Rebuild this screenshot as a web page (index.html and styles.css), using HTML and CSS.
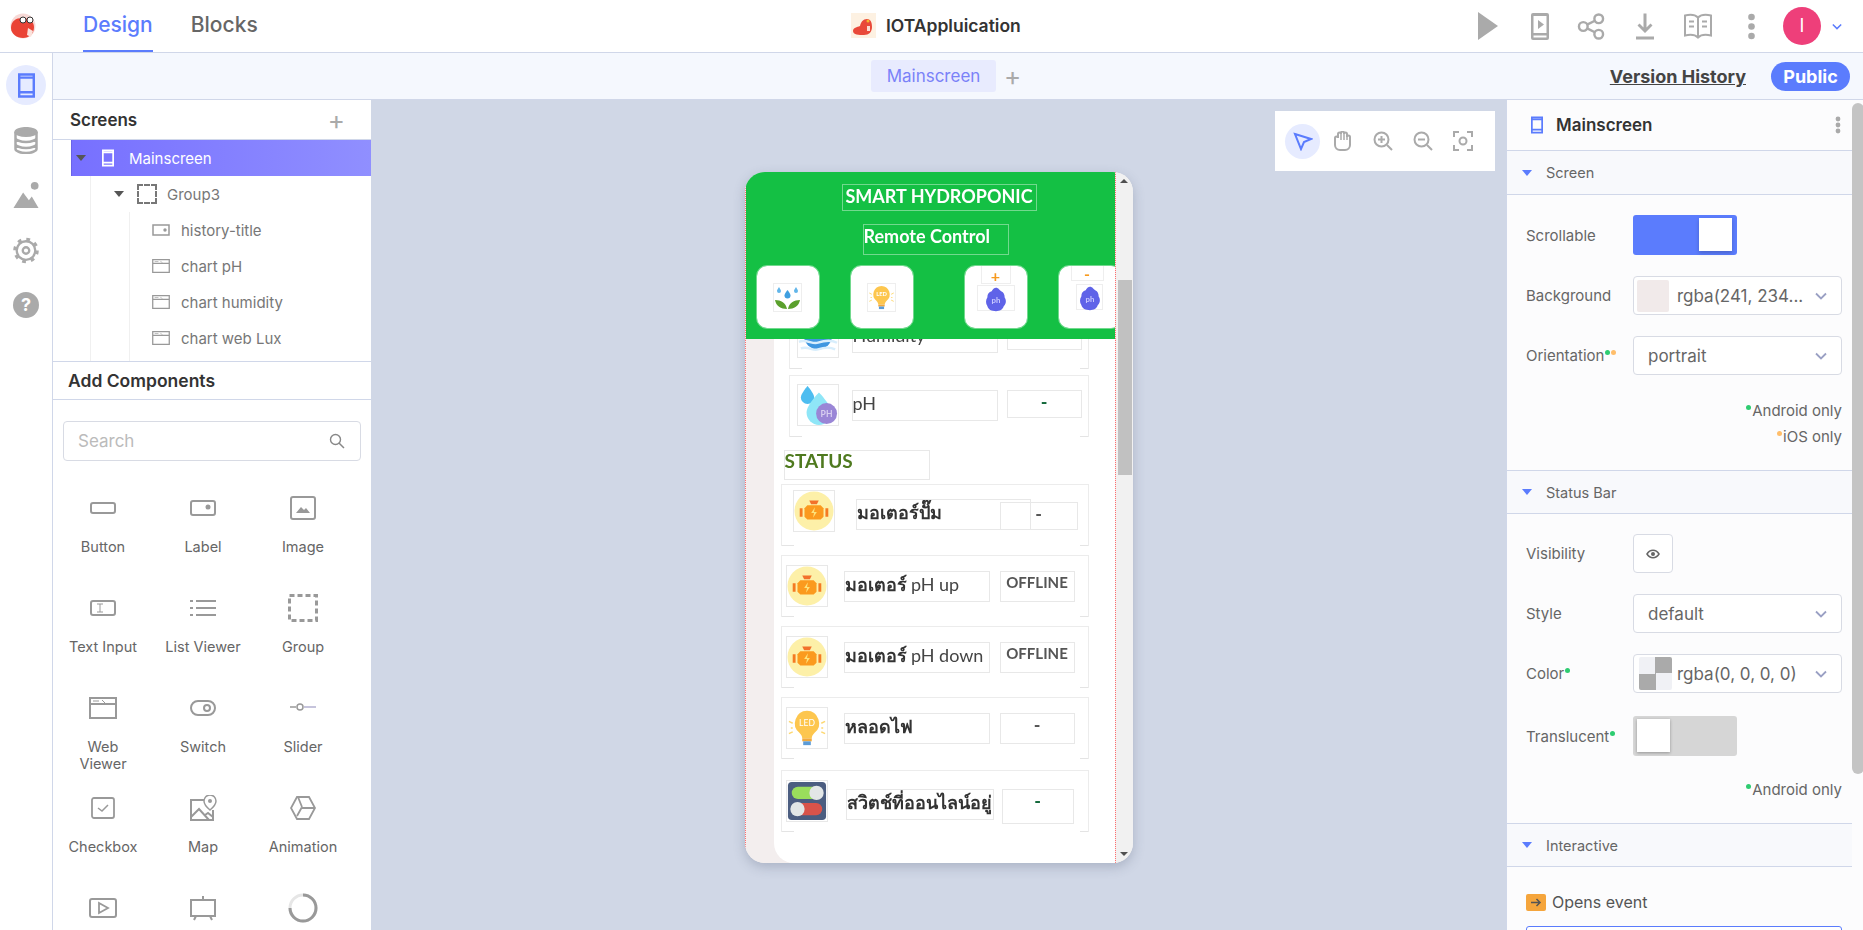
FILE: index.html
```html
<!DOCTYPE html>
<html lang="en">
<head>
    <meta charset="UTF-8">
    <meta name="viewport" content="width=device-width, initial-scale=1.0">
    <title>IOTAppluication - Design</title>
    <link rel="stylesheet" href="styles.css">
</head>
<body>
    <svg class="sprites" width="0" height="0">
        <symbol id="i-phone" viewBox="0 0 14 20"><path d="M1 1h12v18H1zM1 3.500h12M1 15.500h12" fill="none" stroke="currentColor" stroke-width="2"/></symbol>
        <symbol id="i-web" viewBox="0 0 28 22"><path d="M1 1h26v20H1zM1 7h26" fill="none" stroke="currentColor" stroke-width="2"/><path d="M4 4h6M13 3l3 3" stroke="currentColor" stroke-width="1"/></symbol>
        <symbol id="i-chev" viewBox="0 0 12 8"><path d="M1 1.500l5 5 5-5" fill="none" stroke="currentColor" stroke-width="1.800"/></symbol>
        <symbol id="i-motor" viewBox="0 0 42 42">
            <circle cx="21" cy="21" r="20.500" fill="#fdf0a8"/>
            <path d="M16 10h10l-2 4h-6z" fill="#f2712b"/>
            <path d="M14 15h14l3 3v9l-3 3H14l-3-3v-9z" fill="#fb9a1e"/>
            <path d="M6 18h3v9H6zM33 18h3v9h-3z" fill="#f57a22"/>
            <path d="M22 17l-4 6h3l-1 5 4-6h-3z" fill="#fde27a"/>
        </symbol>
        <symbol id="i-bulb" viewBox="0 0 42 42">
            <path d="M21 3a13 13 0 0 0-8 23c2 2 3 4 3 6h10c0-2 1-4 3-6a13 13 0 0 0-8-23z" fill="#fdc64e"/>
            <path d="M16 32h10v3H16z" fill="#f2a93b"/>
            <path d="M17 35h8v4h-8z" fill="#5c9bd6"/>
            <path d="M2 14l4 2M2 27l4-2M40 14l-4 2M40 27l-4-2M4 21h2M36 21h2" stroke="#fdd873" stroke-width="1.500"/>
        </symbol>
        <symbol id="i-blob" viewBox="0 0 26 30">
            <path d="M13 1c3 0 4 3 6 4 3 1 4 4 4 7 2 3 2 7-1 10-1 4-5 6-9 6-5 0-9-2-10-6-2-3-2-7 0-10 0-4 2-6 5-7 1-2 3-4 5-4z" fill="#5f63e8"/>
        </symbol>
    </svg>

    <header class="topbar">
        <svg class="logo" viewBox="0 0 26 26">
            <circle cx="13" cy="13" r="12.500" fill="#f7d9d6"/>
            <path d="M1 15C1 8 6 5 12 5c6 0 12 3 12 9 0 7-5 11-11 11S1 21 1 15z" fill="#ea4335"/>
            <circle cx="13" cy="7" r="3" fill="#fff" stroke="#333"/><circle cx="20" cy="7" r="3" fill="#fff" stroke="#333"/>
            <path d="M18 15l5 3-2 6-4-2z" fill="#fbe2dc"/>
        </svg>
        <nav class="tabs">
            <a class="tab tab-active">Design</a>
            <a class="tab">Blocks</a>
        </nav>
        <div class="project">
            <svg class="project-logo" viewBox="0 0 25 25">
                <rect width="25" height="25" fill="#fdf1e2"/>
                <path d="M2 18c0-3 4-4 7-5 1-4 3-7 7-7 4 0 5 4 5 8 0 5-3 8-8 8-5 0-11 0-11-4z" fill="#e9493a"/>
                <circle cx="17" cy="8" r="1.500" fill="#f5b52e"/>
                <path d="M16 13h3v5h-3z" fill="#fbdcd3"/>
            </svg>
            <span>IOTAppluication</span>
        </div>
        <div class="top-actions">
            <svg class="top-icon play" viewBox="0 0 20 28"><path d="M0 0l20 14L0 28z"/></svg>
            <svg class="top-icon device" viewBox="0 0 18 27"><path fill-rule="evenodd" d="M2 0h14a2 2 0 0 1 2 2v23a2 2 0 0 1-2 2H2a2 2 0 0 1-2-2V2a2 2 0 0 1 2-2zm.5 3v17h13V3zm0 19.500v2h13v-2zM7 7l6 4.500L7 16z"/></svg>
            <svg class="top-icon share" viewBox="0 0 28 28"><g fill="none" stroke="#aaa" stroke-width="2.500"><circle cx="6" cy="14" r="4.500"/><circle cx="22" cy="6" r="4.500"/><circle cx="22" cy="22" r="4.500"/><path d="M10 12l8-4M10 16l8 4"/></g></svg>
            <svg class="top-icon download" viewBox="0 0 18 26"><path d="M0 23h18v3H0zM7.500 0h3v14l4-4 2 2-7.500 7.500L1.500 12l2-2 4 4z"/></svg>
            <svg class="top-icon book" viewBox="0 0 28 26"><g fill="none" stroke="#aaa" stroke-width="2"><path d="M14 4C11 1 5 1 1 2v20c4-1 10-1 13 2 3-3 9-3 13-2V2c-4-1-10-1-13 2zM14 4v20"/><path d="M5 8h5M5 13h5M18 8h5M18 13h5"/></g></svg>
            <svg class="top-icon kebab" viewBox="0 0 7 26"><circle cx="3.500" cy="3.500" r="3.300"/><circle cx="3.500" cy="13" r="3.300"/><circle cx="3.500" cy="22.500" r="3.300"/></svg>
            <div class="avatar">I</div>
            <svg class="avatar-chev"><use href="#i-chev"/></svg>
        </div>
    </header>

    <div class="app">
        <aside class="rail">
            <div class="rail-item rail-active"><svg class="rail-phone"><use href="#i-phone"/></svg></div>
            <div class="rail-item">
                <svg class="rail-icon" viewBox="0 0 24 27"><g fill="none" stroke="#aaa" stroke-width="2.500"><ellipse cx="12" cy="5" rx="10.500" ry="3.800" fill="#aaa"/><path d="M1.500 5v17c0 2 5 4 10.500 4s10.500-2 10.500-4V5M1.500 11c0 2 5 4 10.500 4s10.500-2 10.500-4M1.500 17c0 2 5 4 10.500 4s10.500-2 10.500-4"/></g></svg>
            </div>
            <div class="rail-item">
                <svg class="rail-icon" viewBox="0 0 26 28"><circle cx="22" cy="4" r="4" fill="#aaa"/><path d="M0 27L10 11l6 8 3-4 7 12z" fill="#aaa"/></svg>
            </div>
            <div class="rail-item">
                <svg class="rail-icon" viewBox="0 0 28 28"><g fill="none" stroke="#aaa"><circle cx="14" cy="14" r="10" stroke-width="2.500"/><circle cx="14" cy="14" r="3.500" stroke-width="2.500"/><circle cx="14" cy="14" r="12" stroke-width="3.500" stroke-dasharray="4 5.420"/></g></svg>
            </div>
            <div class="rail-item">
                <div class="help">?</div>
            </div>
        </aside>

        <div class="workspace">
            <div class="subbar">
                <div class="screen-tab">Mainscreen</div>
                <span class="subbar-plus">+</span>
                <a class="version">Version History</a>
                <span class="public">Public</span>
            </div>

            <div class="panes">
                <section class="left-panel">
                    <div class="panel-head">
                        <h2>Screens</h2>
                        <span class="head-plus">+</span>
                    </div>
                    <div class="tree">
                        <div class="tree-row tree-selected">
                            <i class="caret"></i>
                            <svg class="tree-phone"><use href="#i-phone"/></svg>
                            <span>Mainscreen</span>
                        </div>
                        <div class="tree-row tree-group">
                            <i class="caret"></i>
                            <span class="dash-box"></span>
                            <span>Group3</span>
                        </div>
                        <div class="tree-row tree-child">
                            <svg class="tree-icon" viewBox="0 0 18 12"><path d="M1 1h16v10H1z" fill="none" stroke="#999" stroke-width="1.500"/><circle cx="13" cy="6" r="1.700" fill="#999"/></svg>
                            <span>history-title</span>
                        </div>
                        <div class="tree-row tree-child">
                            <svg class="tree-icon"><use href="#i-web"/></svg>
                            <span>chart pH</span>
                        </div>
                        <div class="tree-row tree-child">
                            <svg class="tree-icon"><use href="#i-web"/></svg>
                            <span>chart humidity</span>
                        </div>
                        <div class="tree-row tree-child">
                            <svg class="tree-icon"><use href="#i-web"/></svg>
                            <span>chart web Lux</span>
                        </div>
                    </div>
                    <div class="add-head"><h2>Add Components</h2></div>
                    <div class="search">
                        <span>Search</span>
                        <svg class="search-icon" viewBox="0 0 16 16"><circle cx="6.500" cy="6.500" r="5" fill="none" stroke="#888" stroke-width="1.400"/><path d="M10 10l5 5" stroke="#888" stroke-width="1.500"/></svg>
                    </div>
                    <div class="comp-grid">
                        <div class="comp">
                            <div class="comp-icon"><svg width="26" height="14" viewBox="0 0 26 14"><rect x="1" y="2" width="24" height="10" rx="2" fill="none" stroke="#999" stroke-width="2"/></svg></div>
                            <div>Button</div>
                        </div>
                        <div class="comp">
                            <div class="comp-icon"><svg width="26" height="16" viewBox="0 0 26 16"><rect x="1" y="1" width="24" height="14" rx="2" fill="none" stroke="#999" stroke-width="2"/><circle cx="18" cy="7" r="2.500" fill="#999"/></svg></div>
                            <div>Label</div>
                        </div>
                        <div class="comp">
                            <div class="comp-icon"><svg width="26" height="24" viewBox="0 0 26 24"><rect x="1" y="1" width="24" height="22" rx="2" fill="none" stroke="#999" stroke-width="2"/><path d="M6 17l5-6 3 3 2-2 4 5z" fill="#999"/></svg></div>
                            <div>Image</div>
                        </div>
                        <div class="comp">
                            <div class="comp-icon"><svg width="26" height="16" viewBox="0 0 26 16"><rect x="1" y="1" width="24" height="14" rx="2" fill="none" stroke="#999" stroke-width="2"/><path d="M7 4h6M7 12h6M10 4v8" stroke="#999"/></svg></div>
                            <div>Text Input</div>
                        </div>
                        <div class="comp">
                            <div class="comp-icon"><svg width="26" height="18" viewBox="0 0 26 18"><path d="M0 2h3M6 2h20M0 9h3M6 9h20M0 16h3M6 16h20" stroke="#999" stroke-width="2"/></svg></div>
                            <div>List Viewer</div>
                        </div>
                        <div class="comp">
                            <div class="comp-icon"><svg width="30" height="28" viewBox="0 0 30 28"><rect x="1.500" y="1.500" width="27" height="25" fill="none" stroke="#999" stroke-width="3" stroke-dasharray="5 3"/></svg></div>
                            <div>Group</div>
                        </div>
                        <div class="comp">
                            <div class="comp-icon"><svg class="comp-web"><use href="#i-web"/></svg></div>
                            <div>Web<br>Viewer</div>
                        </div>
                        <div class="comp">
                            <div class="comp-icon"><svg width="26" height="16" viewBox="0 0 26 16"><rect x="1" y="1" width="24" height="14" rx="7" fill="none" stroke="#999" stroke-width="2"/><circle cx="17" cy="8" r="3" fill="none" stroke="#999" stroke-width="2"/></svg></div>
                            <div>Switch</div>
                        </div>
                        <div class="comp">
                            <div class="comp-icon comp-slider"><svg width="26" height="10" viewBox="0 0 26 10"><path d="M0 5h6" stroke="#999" stroke-width="1.500"/><path d="M14 5h12" stroke="#b3b0d0" stroke-width="1.500"/><circle cx="10" cy="5" r="3" fill="none" stroke="#999" stroke-width="1.500"/></svg></div>
                            <div>Slider</div>
                        </div>
                        <div class="comp">
                            <div class="comp-icon"><svg width="24" height="22" viewBox="0 0 24 22"><rect x="1" y="1" width="22" height="20" rx="2" fill="none" stroke="#999" stroke-width="1.800"/><path d="M7 11l4 3 6-6" fill="none" stroke="#999" stroke-width="1.500"/></svg></div>
                            <div>Checkbox</div>
                        </div>
                        <div class="comp">
                            <div class="comp-icon"><svg width="28" height="26" viewBox="0 0 28 26"><path d="M16 5H2v20h22V15M2 22l8-8 10 11M16 20l3-2 5 4" fill="none" stroke="#999" stroke-width="2"/><path d="M21 0a6 6 0 0 0-6 6c0 4 6 9 6 9s6-5 6-9a6 6 0 0 0-6-6z" fill="#fff" stroke="#999" stroke-width="1.500"/><circle cx="21" cy="6" r="2" fill="#999"/></svg></div>
                            <div>Map</div>
                        </div>
                        <div class="comp">
                            <div class="comp-icon"><svg width="26" height="24" viewBox="0 0 26 24"><path d="M7 1h12l6 11-6 11H7L1 12z" fill="none" stroke="#999" stroke-width="1.800"/><path d="M8 1l4 10M25 12H12M7 20l5-9" stroke="#999" stroke-width="1.800"/></svg></div>
                            <div>Animation</div>
                        </div>
                        <div class="comp">
                            <div class="comp-icon"><svg width="28" height="20" viewBox="0 0 28 20"><rect x="1" y="1" width="26" height="18" rx="2" fill="none" stroke="#999" stroke-width="2"/><path d="M10 5v10l9-5z" fill="none" stroke="#999" stroke-width="1.800"/></svg></div>
                        </div>
                        <div class="comp">
                            <div class="comp-icon"><svg width="26" height="26" viewBox="0 0 26 26"><path d="M1 5h24v16H1zM13 1v4M6 21l-2 4M20 21l2 4" fill="none" stroke="#999" stroke-width="2"/></svg></div>
                        </div>
                        <div class="comp">
                            <div class="comp-icon"><svg width="30" height="30" viewBox="0 0 30 30"><circle cx="15" cy="15" r="13" fill="none" stroke="#e6e6e6" stroke-width="3"/><path d="M15 2a13 13 0 1 1-13 13" fill="none" stroke="#999" stroke-width="3"/></svg></div>
                        </div>
                    </div>
                </section>

                <main class="canvas">
                    <div class="canvas-tools">
                        <div class="tool tool-active"><svg width="20" height="20" viewBox="0 0 20 20"><path d="M2 3l16 5-7 3-3 7z" fill="none" stroke="#5b7cfd" stroke-width="2"/></svg></div>
                        <div class="tool"><svg width="18" height="20" viewBox="0 0 18 20"><path d="M1 11V7a1.500 1.500 0 0 1 3 0V3a1.500 1.500 0 0 1 3 0V2a1.500 1.500 0 0 1 3 0v1a1.500 1.500 0 0 1 3 0v3a1.500 1.500 0 0 1 3 0v8a5 5 0 0 1-5 5H6a5 5 0 0 1-5-5z" fill="none" stroke="#aaa" stroke-width="2"/><path d="M7 3v6M10 3v6M13 3v6" stroke="#aaa" stroke-width="1.500"/></svg></div>
                        <div class="tool"><svg width="20" height="20" viewBox="0 0 20 20"><g fill="none" stroke="#aaa" stroke-width="2"><circle cx="8.500" cy="8.500" r="7"/><path d="M14 14l5 5"/><path d="M5 8.500h7M8.500 5v7"/></g></svg></div>
                        <div class="tool"><svg width="20" height="20" viewBox="0 0 20 20"><g fill="none" stroke="#aaa" stroke-width="2"><circle cx="8.500" cy="8.500" r="7"/><path d="M14 14l5 5"/><path d="M5 8.500h7"/></g></svg></div>
                        <div class="tool"><svg width="20" height="20" viewBox="0 0 20 20"><g fill="none" stroke="#aaa" stroke-width="2"><path d="M1 6V1h5M14 1h5v5M19 14v5h-5M6 19H1v-5"/><circle cx="10" cy="10" r="3.500"/></g></svg></div>
                    </div>

                    <div class="phone">
                        <div class="screen">
                            <div class="screen-head">
                                <div class="title-box">SMART HYDROPONIC</div>
                                <div class="remote-box">Remote Control</div>
                                <div class="head-buttons">
                                    <div class="head-btn">
                                        <div class="btn-img">
                                            <svg viewBox="0 0 27 27">
                                                <path d="M13.500 6s-3 3.500-3 5.500a3 3 0 0 0 6 0c0-2-3-5.500-3-5.500z" fill="#3f9fe0"/>
                                                <path d="M5 3S3 6 3 7a2 2 0 0 0 4 0c0-1-2-4-2-4zM22 3s-2 3-2 4a2 2 0 0 0 4 0c0-1-2-4-2-4z" fill="#62b6ea"/>
                                                <path d="M13 25c-1-6-6-9-12-9 1 6 6 9 12 9zM14 25c1-6 6-9 12-9-1 6-6 9-12 9z" fill="#5aa02c"/>
                                            </svg>
                                        </div>
                                    </div>
                                    <div class="head-btn">
                                        <div class="btn-img"><svg viewBox="0 0 42 42"><use href="#i-bulb"/><text x="21" y="19" class="led-text">LED</text></svg></div>
                                    </div>
                                    <div class="head-btn head-btn-ph">
                                        <div class="btn-sign"><span class="plus-sign">+</span></div>
                                        <div class="btn-blob"><svg viewBox="0 0 26 30"><use href="#i-blob"/><text x="13" y="18" class="ph-text">ph</text></svg></div>
                                    </div>
                                    <div class="head-btn head-btn-ph head-btn-cut">
                                        <div class="btn-sign"><span class="minus-sign">-</span></div>
                                        <div class="btn-blob"><svg viewBox="0 0 26 30"><use href="#i-blob"/><text x="13" y="18" class="ph-text">ph</text></svg></div>
                                    </div>
                                </div>
                            </div>

                            <div class="sheet">
                                <div class="group group-sensor group-humidity">
                                    <div class="row-img">
                                        <svg viewBox="0 0 42 42"><circle cx="21" cy="19" r="15" fill="#3f97e0"/><path d="M1 26c8-3 14 3 20 1s14-3 20 0M3 33c8-3 12 3 18 1s12-3 18 0" fill="none" stroke="#d8eefc" stroke-width="2.500"/></svg>
                                    </div>
                                    <div class="row-name row-name-ph">Humidity</div>
                                    <div class="row-val"></div>
                                </div>
                                <div class="group group-sensor">
                                    <div class="row-img">
                                        <svg viewBox="0 0 42 42">
                                            <path d="M10 1s-7 8-7 12a7 7 0 0 0 14 0C17 9 10 1 10 1z" fill="#4dbdf0"/>
                                            <path d="M22 8s-13 13-13 21a13 13 0 0 0 26 0C35 21 22 8 22 8z" fill="#8fe6f7"/>
                                            <circle cx="30" cy="30" r="11" fill="#9a86d6"/>
                                            <text x="30" y="34" class="ph-label">PH</text>
                                        </svg>
                                    </div>
                                    <div class="row-name row-name-ph">pH</div>
                                    <div class="row-val row-val-green">-</div>
                                </div>

                                <div class="status-box">STATUS</div>

                                <div class="group group-pump">
                                    <div class="row-img"><svg><use href="#i-motor"/></svg></div>
                                    <div class="row-name">มอเตอร์ปั๊ม</div>
                                    <div class="row-val">-</div>
                                </div>
                                <div class="group group-device">
                                    <div class="row-img"><svg><use href="#i-motor"/></svg></div>
                                    <div class="row-name">มอเตอร์ <em>pH up</em></div>
                                    <div class="row-val row-val-off">OFFLINE</div>
                                </div>
                                <div class="group group-device">
                                    <div class="row-img"><svg><use href="#i-motor"/></svg></div>
                                    <div class="row-name">มอเตอร์ <em>pH down</em></div>
                                    <div class="row-val row-val-off">OFFLINE</div>
                                </div>
                                <div class="group group-device">
                                    <div class="row-img"><svg viewBox="0 0 42 42"><use href="#i-bulb"/><text x="21" y="19" class="led-text">LED</text></svg></div>
                                    <div class="row-name">หลอดไฟ</div>
                                    <div class="row-val">-</div>
                                </div>
                                <div class="group group-device group-online">
                                    <div class="row-img">
                                        <svg viewBox="0 0 42 42">
                                            <rect x="1" y="1" width="40" height="40" rx="4" fill="#4b5d80"/>
                                            <rect x="5" y="6" width="32" height="13" rx="6.500" fill="#9ade5c"/>
                                            <circle cx="31" cy="12.500" r="7.500" fill="#e2e6e6"/>
                                            <rect x="5" y="23" width="32" height="13" rx="6.500" fill="#d9534a"/>
                                            <circle cx="11" cy="29.500" r="7.500" fill="#e2e6e6"/>
                                        </svg>
                                    </div>
                                    <div class="row-name">สวิตช์ที่ออนไลน์อยู่</div>
                                    <div class="row-val row-val-green">-</div>
                                </div>
                            </div>
                        </div>
                        <div class="phone-scroll">
                            <i class="scroll-up"></i>
                            <i class="scroll-thumb"></i>
                            <i class="scroll-down"></i>
                        </div>
                    </div>
                </main>

                <section class="props">
                    <div class="props-inner">
                        <div class="props-head">
                            <svg class="props-phone"><use href="#i-phone"/></svg>
                            <h3>Mainscreen</h3>
                            <svg class="props-kebab" viewBox="0 0 6 18"><circle cx="3" cy="3" r="2.400"/><circle cx="3" cy="9" r="2.400"/><circle cx="3" cy="15" r="2.400"/></svg>
                        </div>

                        <div class="sec-head"><i class="sec-caret"></i>Screen</div>
                        <div class="sec-body sec-screen">
                            <div class="prop">
                                <label>Scrollable</label>
                                <div class="toggle toggle-on"><i></i></div>
                            </div>
                            <div class="prop">
                                <label>Background</label>
                                <div class="select select-swatch"><i class="swatch"></i><span>rgba(241, 234...</span><svg class="chev"><use href="#i-chev"/></svg></div>
                            </div>
                            <div class="prop">
                                <label>Orientation<i class="dot dot-green"></i><i class="dot dot-orange"></i></label>
                                <div class="select"><span>portrait</span><svg class="chev"><use href="#i-chev"/></svg></div>
                            </div>
                            <div class="note"><i class="dot dot-green"></i>Android only</div>
                            <div class="note"><i class="dot dot-orange"></i>iOS only</div>
                        </div>

                        <div class="sec-head sec-head-low"><i class="sec-caret"></i>Status Bar</div>
                        <div class="sec-body sec-status">
                            <div class="prop">
                                <label>Visibility</label>
                                <div class="eye-btn"><svg width="14" height="10" viewBox="0 0 14 10"><path d="M1 5c3-5 9-5 12 0-3 5-9 5-12 0z" fill="none" stroke="#666" stroke-width="1.500"/><circle cx="7" cy="5" r="2" fill="#666"/></svg></div>
                            </div>
                            <div class="prop">
                                <label>Style</label>
                                <div class="select"><span>default</span><svg class="chev"><use href="#i-chev"/></svg></div>
                            </div>
                            <div class="prop prop-wide">
                                <label>Color<i class="dot dot-green"></i></label>
                                <div class="select select-check"><i class="checker"></i><span>rgba(0, 0, 0, 0)</span><svg class="chev"><use href="#i-chev"/></svg></div>
                            </div>
                            <div class="prop">
                                <label>Translucent<i class="dot dot-green"></i></label>
                                <div class="toggle toggle-off"><i></i></div>
                            </div>
                            <div class="note"><i class="dot dot-green"></i>Android only</div>
                        </div>

                        <div class="sec-head sec-head-low"><i class="sec-caret"></i>Interactive</div>
                        <div class="sec-body sec-int">
                            <div class="event">
                                <svg width="20" height="17" viewBox="0 0 20 17"><rect width="20" height="17" rx="2" fill="#f5a53c"/><path d="M5 8.500h9M10.500 5l3.500 3.500-3.500 3.500" fill="none" stroke="#555" stroke-width="1.500"/></svg>
                                <span>Opens event</span>
                            </div>
                            <div class="event-box"></div>
                        </div>
                    </div>
                    <div class="props-scroll"><i></i></div>
                </section>
            </div>
        </div>
    </div>
</body>
</html>
```

FILE: styles.css
```css
* {
    box-sizing: border-box;
}

body {
    margin: 0;
    height: 930px;
    overflow: hidden;
    background: #fff;
    color: #666;
    font-family: 'Inter', 'Noto Sans', sans-serif;
    font-size: 14px;
}

.sprites {
    position: absolute;
}

h2, h3 {
    margin: 0;
}

i, em {
    font-style: normal;
}

/* top bar */
.topbar {
    display: flex;
    align-items: center;
    height: 53px;
    border-bottom: 1px solid #d0d7e9;
    position: relative;
}

.logo {
    width: 26px;
    height: 26px;
    margin-left: 10px;
}

.tabs {
    display: flex;
    height: 52px;
    margin-left: 47px;
    gap: 38px;
}

.tab {
    font-size: 21px;
    font-weight: 500;
    line-height: 50px;
    color: #666;
}

.tab-active {
    color: #5b7cfd;
    border-bottom: 2px solid #5b7cfd;
}

.project {
    position: absolute;
    left: 851px;
    top: 13px;
    display: flex;
    align-items: center;
    gap: 10px;
    font-size: 17.500px;
    font-weight: 600;
    color: #333;
}

.project-logo {
    width: 25px;
    height: 25px;
}

.top-actions {
    margin-left: auto;
    display: flex;
    align-items: center;
    padding-right: 21px;
}

.top-icon {
    fill: #aaa;
    height: 27px;
}

.play {
    width: 20px;
    height: 28px;
    margin-right: 33px;
}

.device {
    width: 18px;
    margin-right: 28px;
}

.share {
    width: 28px;
    margin-right: 31px;
}

.download {
    width: 18px;
    margin-right: 30px;
}

.book {
    width: 28px;
    margin-right: 36px;
}

.kebab {
    width: 7px;
    margin-right: 28px;
}

.avatar {
    width: 38px;
    height: 38px;
    border-radius: 50%;
    background: #ee3f7a;
    color: #fff;
    text-align: center;
    line-height: 38px;
    font-size: 18px;
}

.avatar-chev {
    width: 10px;
    height: 7px;
    margin-left: 11px;
    color: #5b7cfd;
}

/* main layout */
.app {
    display: flex;
    height: 877px;
}

.rail {
    width: 53px;
    border-right: 1px solid #d0d7e9;
    padding-top: 12px;
    display: flex;
    flex-direction: column;
    align-items: center;
    gap: 15px;
}

.rail-item {
    width: 40px;
    height: 40px;
    border-radius: 50%;
    display: flex;
    align-items: center;
    justify-content: center;
}

.rail-active {
    background: #e6ebff;
    color: #5b7cfd;
}

.rail-phone {
    width: 17px;
    height: 25px;
}

.rail-icon {
    width: 26px;
    height: 27px;
}

.help {
    width: 26px;
    height: 26px;
    border-radius: 50%;
    background: #aaa;
    color: #fff;
    font-weight: 700;
    font-size: 18px;
    line-height: 26px;
    text-align: center;
}

.workspace {
    flex: 1;
    min-width: 0;
    display: flex;
    flex-direction: column;
}

.subbar {
    height: 47px;
    flex-shrink: 0;
    background: #f5f8fe;
    border-bottom: 1px solid #d0d7e9;
    display: flex;
    align-items: center;
    padding-left: 818px;
    padding-right: 13px;
}

.screen-tab {
    width: 125px;
    height: 32px;
    background: #e8ebfe;
    border-radius: 3px;
    color: #7a82f8;
    font-size: 17px;
    line-height: 32px;
    text-align: center;
}

.subbar-plus {
    margin-left: 8px;
    font-size: 26px;
    line-height: 24px;
    color: #aaa;
}

.version {
    margin-left: auto;
    font-size: 18px;
    font-weight: 700;
    color: #444;
    text-decoration: underline;
}

.public {
    margin-left: 25px;
    width: 79px;
    height: 29px;
    background: #5b7cfd;
    border-radius: 15px;
    color: #fff;
    font-size: 18px;
    font-weight: 700;
    line-height: 29px;
    text-align: center;
}

.panes {
    flex: 1;
    display: flex;
    min-height: 0;
}

/* left panel */
.left-panel {
    width: 318px;
    flex-shrink: 0;
    background: #fff;
    overflow: hidden;
}

.left-panel h2 {
    font-size: 17px;
    font-weight: 600;
    color: #333;
}

.panel-head {
    height: 40px;
    display: flex;
    align-items: center;
    justify-content: space-between;
    padding: 0 26px 0 17px;
    border-bottom: 1px solid #d0d7e9;
}

.head-plus {
    font-size: 26px;
    line-height: 24px;
    color: #aaa;
}

.tree {
    height: 222px;
    overflow: hidden;
    border-bottom: 1px solid #d0d7e9;
    background:
        linear-gradient(#f0f0f0, #f0f0f0) 37px 0 / 1px 100% no-repeat,
        linear-gradient(#f0f0f0, #f0f0f0) 76px 72px / 1px 100% no-repeat;
}

.tree-row {
    height: 36px;
    display: flex;
    align-items: center;
    font-size: 15px;
    color: #777;
    white-space: nowrap;
}

.caret {
    width: 0;
    height: 0;
    border-left: 5px solid transparent;
    border-right: 5px solid transparent;
    border-top: 6px solid #555;
}

.tree-selected {
    margin-left: 18px;
    padding-left: 4px;
    background: linear-gradient(90deg, #7770ff, #908fff);
    border-left: 1px solid #6a63e8;
    color: #fff;
}

.tree-phone {
    width: 12px;
    height: 18px;
    margin-left: 16px;
    margin-right: 15px;
}

.tree-group {
    padding-left: 61px;
}

.dash-box {
    width: 20px;
    height: 20px;
    margin-left: 13px;
    margin-right: 10px;
    border: 2px dashed #777;
}

.tree-child {
    padding-left: 99px;
}

.tree-icon {
    width: 18px;
    height: 14px;
    margin-right: 11px;
    color: #999;
}

.add-head {
    height: 38px;
    padding: 0 15px;
    display: flex;
    align-items: center;
    border-bottom: 1px solid #d0d7e9;
}

.add-head h2 {
    font-size: 17.500px;
}

.search {
    display: flex;
    align-items: center;
    justify-content: space-between;
    margin: 21px 10px 0;
    height: 40px;
    padding: 0 15px 0 14px;
    border: 1px solid #d8dbe4;
    border-radius: 4px;
    color: #bbb;
    font-size: 17px;
}

.search-icon {
    width: 16px;
    height: 16px;
}

.comp-grid {
    display: grid;
    grid-template-columns: repeat(3, 100px);
    grid-auto-rows: 100px;
    margin-top: 26px;
    font-size: 14.500px;
    line-height: 17px;
    text-align: center;
    color: #666;
}

.comp-icon {
    height: 42px;
    margin-bottom: 9px;
    display: flex;
    align-items: center;
    justify-content: center;
}

.comp-slider {
    padding-bottom: 3px;
}

.comp-web {
    width: 28px;
    height: 22px;
    color: #999;
}

/* canvas */
.canvas {
    flex: 1;
    min-width: 0;
    background: #d0d7e6;
    position: relative;
    display: flex;
    justify-content: center;
    padding-top: 72px;
}

.canvas-tools {
    position: absolute;
    top: 11px;
    right: 11px;
    width: 220px;
    height: 60px;
    background: #fff;
    display: flex;
    align-items: center;
    padding: 0 10px;
    gap: 5px;
}

.tool {
    width: 35px;
    height: 35px;
    border-radius: 50%;
    display: flex;
    align-items: center;
    justify-content: center;
}

.tool-active {
    background: #e6ebff;
}

/* phone preview */
.phone {
    width: 388px;
    height: 691px;
    display: flex;
    border-radius: 20px;
    overflow: hidden;
    background: #f1f1f1;
    box-shadow: 0 4px 12px rgba(60, 70, 100, 0.25);
}

.screen {
    width: 371px;
    height: 100%;
    background: #f3eeee;
    border-left: 1px dotted #ff6f6f;
    border-right: 1px dotted #ff6f6f;
    overflow: hidden;
    font-family: 'Lato', 'Noto Sans', sans-serif;
    filter: blur(0.35px);
}

.screen-head {
    position: relative;
    z-index: 1;
    height: 167px;
    background: #14c044;
    color: #fff;
    font-weight: 700;
}

.title-box {
    position: absolute;
    top: 12px;
    left: 96px;
    width: 195px;
    height: 27px;
    border: 1px solid rgba(255, 255, 255, 0.4);
    font-size: 18px;
    line-height: 23px;
    white-space: nowrap;
    text-align: center;
}

.remote-box {
    position: absolute;
    top: 52px;
    left: 117px;
    width: 146px;
    height: 31px;
    border: 1px solid rgba(255, 255, 255, 0.4);
    font-size: 18px;
    line-height: 22px;
    white-space: nowrap;
}

.head-buttons {
    position: absolute;
    top: 94px;
    left: 11px;
    display: flex;
    gap: 32px;
}

.head-btn {
    flex-shrink: 0;
    width: 62px;
    height: 62px;
    background: #fff;
    border-radius: 10px;
    outline: 1px solid rgba(255, 255, 255, 0.4);
    display: flex;
    flex-direction: column;
    align-items: center;
    justify-content: center;
}

.head-btn:nth-child(2) {
    margin-right: 20px;
}

.btn-img {
    width: 27px;
    height: 27px;
    outline: 1px solid #eee;
}

.btn-img svg {
    width: 27px;
    height: 27px;
    display: block;
}

.head-btn-ph {
    justify-content: flex-start;
}

.btn-sign {
    width: 30px;
    height: 18px;
    border: 1px solid #eee;
    border-top: none;
    text-align: center;
    font-size: 16px;
    line-height: 20px;
}

.head-btn-cut .btn-sign {
    width: 33px;
    height: 15px;
    line-height: 16px;
    margin-left: -5px;
}

.plus-sign, .minus-sign {
    color: #f79a1e;
}

.btn-blob {
    width: 38px;
    height: 26px;
    margin-top: 1px;
    padding: 1px 0;
    border: 1px solid #eee;
    display: flex;
    justify-content: center;
}

.head-btn-cut .btn-blob {
    width: 27px;
    margin-top: 3px;
}

.btn-blob svg {
    width: 24px;
    height: 26px;
}

.led-text {
    font-size: 9px;
    fill: #fff;
    text-anchor: middle;
}

.ph-text {
    font-size: 9px;
    font-weight: 700;
    fill: #c9c9ff;
    text-anchor: middle;
}

.ph-label {
    font-size: 9px;
    font-weight: 700;
    fill: #d8cff0;
    text-anchor: middle;
}

.sheet {
    height: 524px;
    margin-left: 28px;
    padding-top: 1px;
    background: #fff;
    border-bottom-left-radius: 20px;
}

.group {
    display: flex;
    align-items: flex-start;
    height: 62px;
    border: 1px solid #ececec;
    border-bottom: none;
    background:
        linear-gradient(#e4e4e4, #e4e4e4) left bottom / 12px 1px no-repeat,
        linear-gradient(#e4e4e4, #e4e4e4) right bottom / 8px 1px no-repeat;
    font-size: 18px;
    color: #333;
}

.row-img {
    flex-shrink: 0;
    width: 42px;
    height: 42px;
    border: 1px solid #e8e8e8;
}

.row-img svg {
    display: block;
    width: 40px;
    height: 40px;
}

.row-name {
    flex-shrink: 0;
    width: 146px;
    height: 31px;
    border: 1px solid #e8e8e8;
    font-weight: 700;
    line-height: 24px;
    white-space: nowrap;
    overflow: hidden;
}

.row-name em {
    font-weight: 400;
    color: #444;
}

.row-val {
    flex-shrink: 0;
    width: 75px;
    height: 30px;
    border: 1px solid #e8e8e8;
    text-align: center;
    font-weight: 700;
    line-height: 22px;
    color: #555;
}

.row-val-off {
    font-size: 15px;
    line-height: 20px;
}

.row-val-green {
    color: #13693b;
}

.group-sensor {
    margin-left: 15px;
    width: 300px;
    padding-left: 7px;
    padding-top: 8px;
}

.group-sensor .row-name {
    margin-left: 13px;
    margin-top: 6px;
}

.group-sensor .row-val {
    margin-left: 9px;
    margin-top: 6px;
    height: 28px;
}

.group-humidity {
    margin-top: -33px;
    margin-bottom: 6px;
}

.row-name-ph {
    font-weight: 400;
    color: #444;
}

.status-box {
    margin: 13px 0 4px 10px;
    width: 146px;
    height: 30px;
    border: 1px solid #e8e8e8;
    font-size: 19px;
    font-weight: 700;
    line-height: 20px;
    color: #4f7a1f;
}

.group-pump, .group-device {
    margin-left: 7px;
    width: 308px;
}

.group-pump {
    padding-left: 11px;
    padding-top: 5px;
    margin-bottom: 9px;
}

.group-pump .row-name {
    margin-left: 21px;
    margin-top: 9px;
    width: 175px;
}

.group-pump .row-val {
    margin-left: -31px;
    margin-top: 12px;
    width: 78px;
    height: 28px;
}

.group-device {
    padding-left: 4px;
    padding-top: 9px;
    margin-bottom: 9px;
}

.group-device .row-name {
    margin-left: 16px;
    margin-top: 6px;
}

.group-device .row-val {
    margin-left: 10px;
    margin-top: 6px;
    height: 31px;
}

.group-online {
    margin-top: 11px;
}

.group-online .row-name {
    margin-left: 18px;
    margin-top: 9px;
    width: 148px;
}

.group-online .row-val {
    margin-left: 8px;
    margin-top: 9px;
    width: 72px;
    height: 35px;
}

.phone-scroll {
    flex: 1;
    position: relative;
    background: #f1f1f1;
}

.scroll-up, .scroll-down {
    position: absolute;
    left: 4px;
    width: 0;
    height: 0;
    border-left: 4px solid transparent;
    border-right: 4px solid transparent;
}

.scroll-up {
    top: 7px;
    border-bottom: 4px solid #505050;
}

.scroll-down {
    bottom: 7px;
    border-top: 4px solid #505050;
}

.scroll-thumb {
    position: absolute;
    top: 108px;
    left: 2px;
    width: 14px;
    height: 195px;
    background: #c1c1c1;
}

/* properties panel */
.props {
    width: 357px;
    flex-shrink: 0;
    display: flex;
    background: #fcfcfd;
    border-left: 1px solid #d0d7e9;
    overflow: hidden;
}

.props-inner {
    width: 345px;
    flex-shrink: 0;
    font-size: 15px;
    color: #666;
}

.props-head {
    height: 51px;
    display: flex;
    align-items: center;
    padding-left: 24px;
    border-bottom: 1px solid #d0d7e9;
}

.props-phone {
    width: 12px;
    height: 18px;
    color: #5b7cfd;
}

.props-head h3 {
    margin-left: 13px;
    font-size: 17px;
    font-weight: 600;
    color: #333;
}

.props-kebab {
    width: 6px;
    height: 18px;
    margin-left: auto;
    margin-right: 11px;
    fill: #aaa;
}

.sec-head {
    height: 44px;
    display: flex;
    align-items: center;
    padding-left: 15px;
    background: #f8f9fc;
    border-bottom: 1px solid #d0d7e9;
    font-size: 14.500px;
}

.sec-head-low {
    height: 43px;
}

.sec-caret {
    width: 0;
    height: 0;
    margin-right: 14px;
    border-left: 5px solid transparent;
    border-right: 5px solid transparent;
    border-top: 6px solid #5b7cfd;
}

.sec-body {
    padding: 20px 10px 0 19px;
    border-bottom: 1px solid #d0d7e9;
}

.sec-screen {
    height: 276px;
}

.sec-status {
    height: 310px;
}

.sec-int {
    padding-top: 25px;
    border: none;
}

.prop {
    display: flex;
    align-items: center;
    margin-bottom: 21px;
}

.prop-wide {
    margin-bottom: 23px;
}

.prop label {
    width: 107px;
    flex-shrink: 0;
    white-space: nowrap;
}

.dot {
    display: inline-block;
    width: 5px;
    height: 5px;
    margin-left: 1px;
    border-radius: 50%;
    vertical-align: 6px;
}

.dot-green {
    background: #2ecc71;
}

.dot-orange {
    background: #ffbe6b;
}

.toggle {
    width: 104px;
    height: 40px;
    border-radius: 3px;
    position: relative;
}

.toggle i {
    position: absolute;
    top: 3px;
    display: block;
    width: 33px;
    height: 33px;
    background: #fff;
}

.toggle-on {
    background: #5b7cfd;
}

.toggle-on i {
    right: 5px;
    box-shadow: 0 2px 4px rgba(0, 0, 0, 0.2);
}

.toggle-off {
    background: #d6d6d6;
}

.toggle-off i {
    left: 4px;
    box-shadow: 0 1px 3px rgba(0, 0, 0, 0.3);
}

.select {
    width: 210px;
    height: 39px;
    display: flex;
    align-items: center;
    padding: 0 14px;
    background: #fff;
    border: 1px solid #d8dbe4;
    border-radius: 4px;
    font-size: 17px;
    color: #666;
    white-space: nowrap;
}

.select-swatch {
    padding-left: 3px;
}

.select-check {
    padding-left: 5px;
}

.swatch {
    width: 32px;
    height: 32px;
    margin-right: 8px;
    background: #f1eaea;
    border-radius: 2px;
}

.checker {
    width: 33px;
    height: 33px;
    margin-right: 5px;
    border-radius: 2px;
    background: conic-gradient(#aaa 25%, #f0f1f5 0 50%, #aaa 0 75%, #f0f1f5 0);
}

.chev {
    width: 12px;
    height: 8px;
    margin-left: auto;
    color: #9aa0c4;
}

.note {
    text-align: right;
    line-height: 26px;
    font-size: 15px;
}

.note .dot {
    margin-right: 1px;
}

.sec-screen .prop:nth-child(3) {
    margin-bottom: 23px;
}

.eye-btn {
    width: 40px;
    height: 39px;
    background: #fff;
    border: 1px solid #d8dbe4;
    border-radius: 4px;
    display: flex;
    align-items: center;
    justify-content: center;
}

.event {
    display: flex;
    align-items: center;
    gap: 6px;
    font-size: 16px;
    color: #555;
}

.event-box {
    margin-top: 14px;
    height: 40px;
    background: #fff;
    border: 1px solid #5b7cfd;
    border-radius: 3px;
}

.props-scroll {
    flex: 1;
    padding-top: 3px;
}

.props-scroll i {
    display: block;
    width: 12px;
    height: 671px;
    background: #c4c4c4;
    border-radius: 6px;
}
```
